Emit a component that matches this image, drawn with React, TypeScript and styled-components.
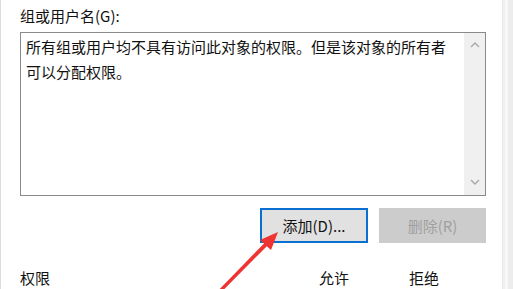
import React from 'react';
import styled, { createGlobalStyle } from 'styled-components';

const GlobalStyle = createGlobalStyle`
  html, body {
    margin: 0;
    padding: 0;
    background: #ffffff;
    overflow: hidden;
  }
  body {
    font-family: "Noto Sans CJK SC", "Noto Sans", sans-serif;
    font-size: 15px;
    color: #111;
  }
`;

const Window = styled.div`
  position: relative;
  display: flex;
  width: 513px;
  height: 289px;
  overflow: hidden;
  background: #fff;
`;

const EdgeLeft = styled.div`
  width: 1px;
  background: #dcdcdc;
`;

const EdgeRight = styled.div`
  width: 11px;
  background: linear-gradient(
    to right,
    #e4e4e4 0,
    #f0f0f0 1px,
    #f0f0f0 3px,
    #fbfbfb 4px,
    #fbfbfb 5px,
    #ededed 6px,
    #ececec 100%
  );
`;

const Content = styled.div`
  flex: 1;
  padding: 5px 16px 0 19px;
  display: flex;
  flex-direction: column;
`;

const Label = styled.div`
  line-height: 22px;
  margin-bottom: 5px;
`;

const ListBox = styled.div`
  display: flex;
  height: 169px;
  box-sizing: border-box;
  border: 1px solid #8a8a8a;
  background: #fff;
`;

const ListText = styled.div`
  flex: 1;
  padding: 1px 10px 0 5px;
  line-height: 25px;
`;

const ScrollBar = styled.div`
  width: 21px;
  background: #f0f0f0;
  display: flex;
  flex-direction: column;
  justify-content: space-between;
  align-items: center;
  padding: 8px 0 9px;
`;

const ButtonRow = styled.div`
  display: flex;
  justify-content: flex-end;
  gap: 11px;
  margin-top: 12px;
`;

const Button = styled.div<{ $focused?: boolean; $disabled?: boolean }>`
  width: ${p => (p.$focused ? '108px' : '107px')};
  height: 35px;
  box-sizing: border-box;
  display: flex;
  align-items: center;
  justify-content: center;
  background: ${p => (p.$disabled ? '#cccccc' : '#e1e1e1')};
  border: ${p => (p.$focused ? '2px solid #0a6fcf' : '1px solid #cccccc')};
  color: ${p => (p.$disabled ? '#a0a0a0' : '#111')};
`;

const Header = styled.div`
  display: grid;
  grid-template-columns: 1fr 90px 90px;
  padding-right: 17px;
  margin-top: 24px;
  line-height: 22px;
`;

const HeaderCell = styled.div<{ $center?: boolean }>`
  text-align: ${p => (p.$center ? 'center' : 'left')};
`;

const Overlay = styled.svg`
  position: absolute;
  left: 0;
  top: 0;
  pointer-events: none;
`;

const Chevron = ({ up }: { up?: boolean }) => (
  <svg width="10" height="8" viewBox="0 0 10 8">
    <path
      d={up ? 'M1 6 L5 2 L9 6' : 'M1 2 L5 6 L9 2'}
      fill="none"
      stroke="#a8a8a8"
      strokeWidth="1.4"
    />
  </svg>
);

export default function App() {
  return (
    <>
      <GlobalStyle />
      <Window>
        <EdgeLeft />
        <Content>
          <Label>组或用户名(G):</Label>
          <ListBox>
            <ListText>
              所有组或用户均不具有访问此对象的权限。但是该对象的所有者可以分配权限。
            </ListText>
            <ScrollBar>
              <Chevron up />
              <Chevron />
            </ScrollBar>
          </ListBox>
          <ButtonRow>
            <Button $focused>添加(D)...</Button>
            <Button $disabled>删除(R)</Button>
          </ButtonRow>
          <Header>
            <HeaderCell>权限</HeaderCell>
            <HeaderCell $center>允许</HeaderCell>
            <HeaderCell $center>拒绝</HeaderCell>
          </Header>
        </Content>
        <EdgeRight />
        <Overlay width="513" height="289" viewBox="0 0 513 289">
          <polygon
            points="278,232 260,240 264,243.4 211.5,297.5 214.5,299 266.8,246.2 271,250"
            fill="#ee3433"
          />
        </Overlay>
      </Window>
    </>
  );
}
